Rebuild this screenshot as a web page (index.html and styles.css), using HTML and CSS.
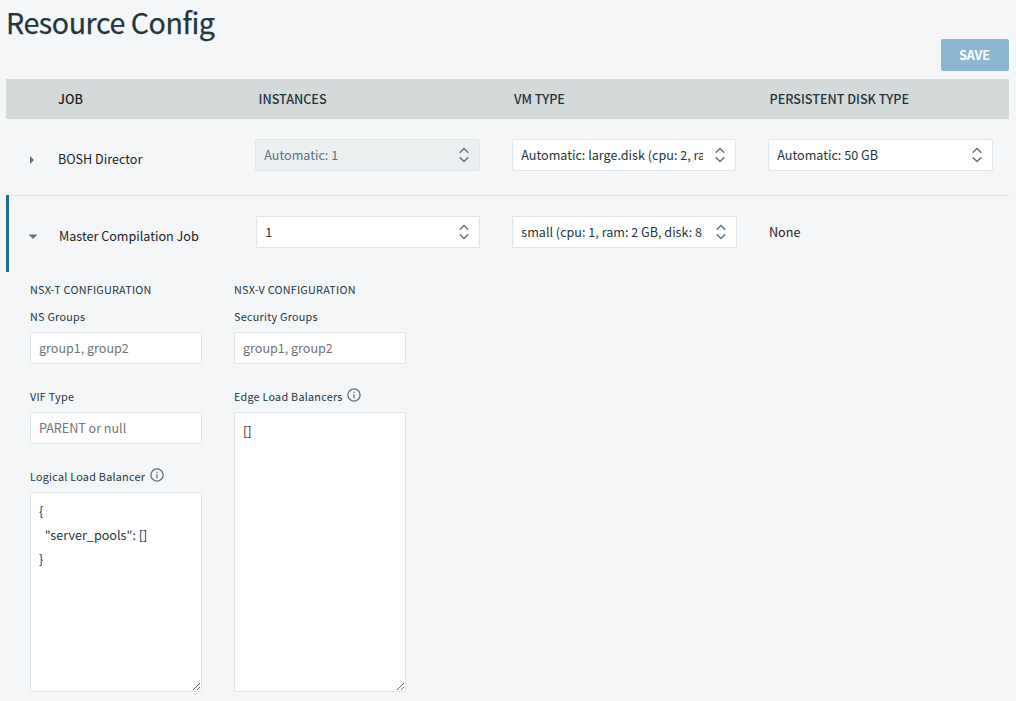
FILE: index.html
```html
<!DOCTYPE html>
<html lang="en">
<head>
<meta charset="utf-8">
<title>Resource Config</title>
<link rel="stylesheet" href="styles.css">
</head>
<body>
<svg class="defs" aria-hidden="true">
  <symbol id="sort" viewBox="0 0 12 16"><path d="M1.7 5.8 6 1.6l4.3 4.2M1.7 10.2 6 14.4l4.3-4.2"/></symbol>
  <symbol id="info" viewBox="0 0 14 14"><circle cx="7" cy="7" r="6.1"/><path d="M7 6.2v4M7 3.8v1.3"/></symbol>
</svg>
<main class="page">
  <header class="top">
    <h1 class="title">Resource Config</h1>
    <button class="save">SAVE</button>
  </header>
  <div class="row head">
    <span></span><span class="head-job">JOB</span><span class="head-instances">INSTANCES</span><span class="head-vm">VM TYPE</span><span class="head-disk">PERSISTENT DISK TYPE</span>
  </div>
  <section class="row job">
    <svg class="caret" viewBox="0 0 8 8"><path d="M2 0l4 4-4 4z"/></svg>
    <span class="name">BOSH Director</span>
    <div class="picker"><select class="select" disabled><option>Automatic: 1</option></select><svg class="sort"><use href="#sort"/></svg></div>
    <div class="picker"><select class="select"><option>Automatic: large.disk (cpu: 2, ram: 8 GB, disk: 64 GB)</option></select><svg class="sort"><use href="#sort"/></svg></div>
    <div class="picker"><select class="select"><option>Automatic: 50 GB</option></select><svg class="sort"><use href="#sort"/></svg></div>
  </section>
  <section class="row job open">
    <svg class="caret" viewBox="0 0 8 8"><path d="M-.5 1.6h9L4 6z"/></svg>
    <span class="name">Master Compilation Job</span>
    <div class="picker"><select class="select"><option>1</option></select><svg class="sort"><use href="#sort"/></svg></div>
    <div class="picker"><select class="select"><option>small (cpu: 1, ram: 2 GB, disk: 8 GB)</option></select><svg class="sort"><use href="#sort"/></svg></div>
    <span class="none">None</span>
  </section>
  <div class="config">
    <section class="group">
      <h2 class="group-title">NSX-T CONFIGURATION</h2>
      <label class="field"><span class="label">NS Groups</span><input class="input" placeholder="group1, group2"></label>
      <label class="field"><span class="label">VIF Type</span><input class="input" placeholder="PARENT or null"></label>
      <label class="field"><span class="label">Logical Load Balancer<svg class="info"><use href="#info"/></svg></span><textarea class="input area logical" spellcheck="false">{
  "server_pools": []
}</textarea></label>
    </section>
    <section class="group">
      <h2 class="group-title">NSX-V CONFIGURATION</h2>
      <label class="field"><span class="label">Security Groups</span><input class="input" placeholder="group1, group2"></label>
      <label class="field"><span class="label">Edge Load Balancers<svg class="info"><use href="#info"/></svg></span><textarea class="input area edge" spellcheck="false">[]</textarea></label>
    </section>
  </div>
</main>
</body>
</html>
```
FILE: styles.css
```css
* { box-sizing: border-box; }
body {
  margin: 0;
  height: 701px;
  overflow: hidden;
  background: #f4f6f8;
  color: #243640;
  font: 12.6px/24px "Noto Sans CJK SC", "Noto Sans", sans-serif;
}
.defs { display: none; }
.page { padding: 0 7px 0 6px; }
.top { display: flex; justify-content: space-between; height: 79px; }
.title {
  margin: 0; font-size: 28.6px; line-height: 44px; font-weight: 400;
  letter-spacing: -.43px; white-space: nowrap; -webkit-text-stroke: .25px #243640;
}
.save {
  width: 68px; height: 32px; margin-top: 39px; padding: 0 1px 0 0;
  border: 0; border-radius: 2px; background: #8cb6d2; color: #fff;
  font: 700 12.6px/32px "Noto Sans CJK SC", "Noto Sans", sans-serif;
}
.row { display: grid; grid-template-columns: 52px 197px 225px 224px 225px; }
.head { height: 40px; background: #d4dad9; line-height: 40px; font-weight: 500; white-space: nowrap; }
.head-job { color: #222; }
.head-instances { padding-left: 3.5px; }
.head-vm { padding-left: 34px; }
.head-disk { padding-left: 65.5px; }
.job { height: 76px; padding-top: 20px; align-items: start; }
.job .picker + .picker { margin-left: 32px; margin-right: -32px; }
.job .picker + .picker + .picker { margin-left: 64px; margin-right: -64px; }
.open {
  position: relative;
  grid-template-columns: 50px 197px 224px 225px 225px;
  height: 77px;
  padding-left: 3px;
  border-top: 1px solid #dfe4e8;
}
.open::before { content: ""; position: absolute; left: 0; top: -1px; width: 3px; height: 77px; background: #1b6d9a; }
.caret { width: 8px; height: 8px; margin: 17px 0 0 22px; fill: #5b7482; overflow: visible; }
.open .caret { margin-left: 20px; }
.name, .none { color: #222; line-height: 32px; white-space: nowrap; }
.name { margin-top: 4px; }
.none { margin-left: 64px; }
.picker { position: relative; height: 32px; }
.select {
  appearance: none; display: block; width: 100%; height: 32px; margin: 0;
  padding: 0 32px 0 8.25px; border: 1px solid #dfe5e8; border-radius: 2px;
  background: #fff; color: #243640; font: inherit; line-height: 30px; opacity: 1;
}
.select:disabled { background: #ebeff0; color: #5b7482; }
.sort { position: absolute; right: 10px; top: 8px; width: 12px; height: 16px; fill: none; stroke: #5b7482; stroke-width: 1.4; }
.config { display: flex; gap: 32px; padding: 7px 0 0 24px; }
.group { width: 172px; }
.group-title { margin: 0 0 4px; font-size: 10.8px; line-height: 20px; font-weight: 400; letter-spacing: .24px; white-space: nowrap; }
.field { display: block; height: 80px; }
.label { display: flex; align-items: center; height: 29px; padding-bottom: 4px; font-size: 10.8px; letter-spacing: .25px; white-space: nowrap; }
.info { width: 14px; height: 14px; margin: -1px 0 0 4.5px; fill: none; stroke: #5b7482; stroke-width: 1.3; }
.input {
  display: block; width: 172px; height: 32px; margin: 0; padding: 0 8px 2px;
  border: 1px solid #dfe5e8; border-radius: 2px; outline: 0;
  background: #fff; color: #243640; font: inherit;
}
.input::placeholder { color: #757575; opacity: 1; letter-spacing: -.03px; }
.area { padding: 6px 8px; line-height: 24px; resize: both; white-space: pre-wrap; }
.logical { height: 200px; }
.edge { height: 280px; }
```
